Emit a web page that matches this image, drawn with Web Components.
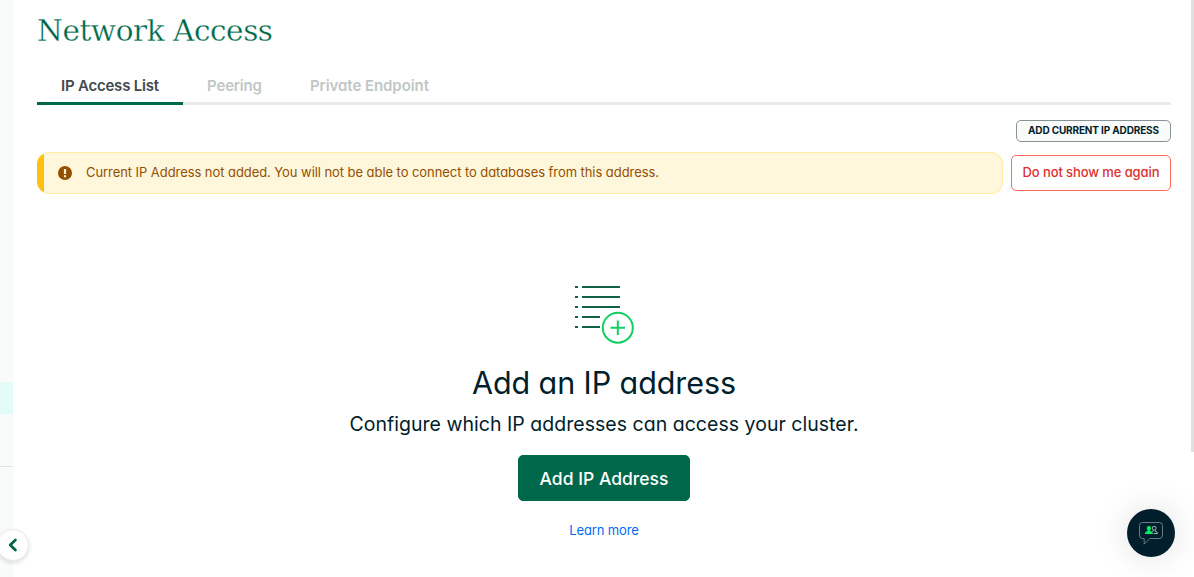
<!DOCTYPE html>
<html lang="en"><head><meta charset="utf-8"><title>Network Access</title>
<style>
html,body{margin:0;height:100%;overflow:hidden;background:#fff}
body{font-family:Inter,Lato,"Liberation Sans",sans-serif;font-feature-settings:"cv11" 1;color:#001e2b}
</style></head><body>
<access-app></access-app>
<script>
const define=(name,html,setup)=>customElements.define(name,class extends HTMLElement{
  constructor(){super();this.attachShadow({mode:'open'}).innerHTML=html}
  connectedCallback(){if(setup)setup(this)}
});

/* One line of text, tracked so that it fills the given width */
define('fit-text',`<style>:host{display:inline-block;white-space:nowrap}span{display:inline-block}</style><span><slot></slot></span>`,el=>{
  const w=parseFloat(el.getAttribute('w')),s=el.shadowRoot.querySelector('span');
  el.style.width=w+'px';
  s.style.letterSpacing='0px';
  const n=el.textContent.length;
  const gap=(w-s.getBoundingClientRect().width)/(n-1);
  s.style.letterSpacing=gap.toFixed(3)+'px';
});

define('side-rail',`<style>
:host{display:flex;flex-direction:column;width:13px;flex:none;height:577px;background:#f9fbfa}
.top{height:382px}.active{height:32px;background:#e3fcf7}.rest{height:52px;border-bottom:1px solid #e1e6e4}
</style><div class="top"></div><div class="active"></div><div class="rest"></div>`);

define('collapse-button',`<style>
:host{position:absolute;left:-3px;top:529px;width:32px;height:32px;box-sizing:border-box;border:1px solid #e8edeb;border-radius:50%;background:#fff;box-shadow:0 2px 4px rgba(0,30,43,.14)}
svg{display:block}
</style><svg width="30" height="30" viewBox="0 0 30 30"><path d="M17.4 10l-5.2 5 5.2 5" fill="none" stroke="#00684a" stroke-width="2.8" stroke-linecap="round" stroke-linejoin="round"/></svg>`);

define('page-title',`<style>
:host{display:block;height:70px;padding-top:11px;box-sizing:border-box;line-height:40px;font-family:"DejaVu Serif","Liberation Serif",serif;font-size:29.5px;color:#00684a}
h1{font:inherit;margin:0;-webkit-text-stroke:.3px #fff}
</style><h1><slot></slot></h1>`);

define('tab-item',`<style>
:host{display:block;height:35px;padding:0 24px;box-sizing:border-box;line-height:31px;font-size:15px;font-weight:600;color:#c1c7c6;border-bottom:3px solid transparent;margin-bottom:-3px}
:host([selected]){color:#434a4e;border-color:#00684a}
</style><slot></slot>`);
define('tab-bar',`<style>:host{display:flex;height:32px;border-bottom:3px solid #e8edeb}</style><slot></slot>`);

define('ui-button',`<style>
:host{display:flex;align-items:center;justify-content:center;box-sizing:border-box;border:1px solid;white-space:nowrap}
:host([kind=small]){width:155px;height:22px;border-color:#889397;border-radius:5px;background:#f9fbfa;font-size:10px;font-weight:700;color:#001e2b;padding-bottom:2px}
:host([kind=danger]){width:160px;height:36px;border-color:#ff6960;border-radius:5px;background:#fff;font-size:13px;font-weight:500;color:#db3030;padding-bottom:2px}
:host([kind=primary]){width:172px;height:46px;border-color:#00684a;border-radius:5px;background:#00684a;font-size:17.5px;font-weight:500;color:#fff}
</style><slot></slot>`);

define('warning-banner',`<style>
:host{display:flex;align-items:center;flex:1;height:42px;box-sizing:border-box;border:1px solid #ffec9e;border-left:0;border-radius:12px;background:linear-gradient(90deg,#ffc010 7px,#fef7db 7px) border-box;color:#944f01;font-size:13px;padding-left:21px;gap:14px}
::slotted(*){margin-bottom:2px}
</style><svg width="14" height="14" viewBox="0 0 14 14"><circle cx="7" cy="7" r="7" fill="#944f01"/><path d="M5.9 2.9h2.2v5H5.9zM5.9 9.3h2.2v1.9H5.9z" fill="#fef7db"/></svg><slot></slot>`);

define('list-plus-icon',`<style>:host{display:block;width:60px;height:60px}svg{display:block}</style>
<svg width="60" height="60" viewBox="0 0 60 60" fill="none" stroke-width="2">
<path stroke="#116149" d="M1 2h3M8 2h38M1 12h3M8 12h38M1 22h3M8 22h38M1 32h3M8 32h18M1 42h3M8 42h18"/>
<circle cx="43.8" cy="42.7" r="15" stroke="#13cf62"/><path stroke="#13cf62" d="M43.8 35.5v14.4M36.6 42.7h14.4"/></svg>`);

define('empty-state',`<style>
:host{display:flex;flex-direction:column;align-items:center;padding-top:91px}
h2,p{margin:0;font-weight:400}
h2{font-size:30.5px;line-height:40px;margin-top:18px}
p{font-size:19.5px;line-height:28px;margin:7px 0 17px}
a{font-size:13px;line-height:20px;color:#016bf8;margin-top:19px}
</style><list-plus-icon></list-plus-icon>
<h2><fit-text w="264">Add an IP address</fit-text></h2>
<p><fit-text w="509">Configure which IP addresses can access your cluster.</fit-text></p>
<ui-button kind="primary"><fit-text w="129">Add IP Address</fit-text></ui-button>
<a><fit-text w="69.5">Learn more</fit-text></a>`);

define('chat-bubble',`<style>
:host{position:absolute;left:1127px;top:509px;width:48px;height:48px;border-radius:50%;background:#001e2b;box-shadow:0 0 35px rgba(0,0,0,.13)}
svg{display:block}
</style><svg width="48" height="48" viewBox="0 0 48 48" fill="none" stroke="#6d7b82" stroke-width="1">
<path d="M15.5 13.5h17q3 0 3 3v10q0 3-3 3H22.8l-5.6 5.7v-5.7h-1.7q-3 0-3-3v-10q0-3 3-3z"/>
<circle cx="27.2" cy="19.2" r="1.9" stroke="#a9b3b6"/><path stroke="#a9b3b6" d="M26.2 21.2v1l-1 .6M28.2 21.2v1q2.4.5 2.3 2.3h-4"/>
<path stroke="none" fill="#00ed64" d="M21.9 17a2.2 2.2 0 0 1 2.2 2.2q0 1.5-1.1 2.2v.7q2.8.5 2.8 2.9h-7.9q0-2.4 2.9-2.9v-.7q-1.1-.7-1.1-2.2a2.2 2.2 0 0 1 2.2-2.2z"/></svg>`);

define('access-app',`<style>
:host{display:flex;position:relative;width:1194px;height:577px;overflow:hidden}
main{flex:1;padding:0 20px 0 24px}
.actions{display:flex;justify-content:flex-end;margin-top:15px}
.notice{display:flex;align-items:center;gap:8px;margin-top:10px}
.scroll{width:3px;height:452px;background:#e0e0e0}
</style><side-rail></side-rail>
<main>
<page-title><fit-text w="236">Network Access</fit-text></page-title>
<tab-bar><tab-item selected><fit-text w="98">IP Access List</fit-text></tab-item><tab-item><fit-text w="55">Peering</fit-text></tab-item><tab-item><fit-text w="119">Private Endpoint</fit-text></tab-item></tab-bar>
<div class="actions"><ui-button kind="small"><fit-text w="131">ADD CURRENT IP ADDRESS</fit-text></ui-button></div>
<div class="notice"><warning-banner><fit-text w="573">Current IP Address not added. You will not be able to connect to databases from this address.</fit-text></warning-banner><ui-button kind="danger"><fit-text w="137">Do not show me again</fit-text></ui-button></div>
<empty-state></empty-state>
</main><div class="scroll"></div>
<collapse-button></collapse-button><chat-bubble></chat-bubble>`);
</script></body></html>
